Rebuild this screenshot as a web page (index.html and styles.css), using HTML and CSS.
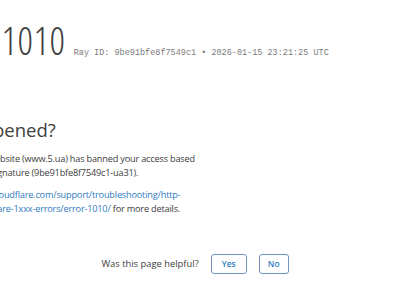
FILE: index.html
```html
<!DOCTYPE html>
<html lang="en">
<head>
    <meta charset="UTF-8">
    <meta name="viewport" content="width=device-width, initial-scale=1.0">
    <title>Access denied | www.5.ua used Cloudflare to restrict access</title>
    <link rel="stylesheet" href="styles.css">
</head>
<body>
    <div class="page">
        <header class="header">
            <h1 class="title">
                <span class="code">Error 1010</span>
                <span class="ray">Ray ID: 9be91bfe8f7549c1 &bull; 2026-01-15 23:21:25 UTC</span>
            </h1>
            <h2 class="subtitle">Access denied</h2>
        </header>
        <section class="what">
            <h2>What happened?</h2>
            <p>The owner of this website (www.5.ua) has banned your access based<br>on your browser's signature (9be91bfe8f7549c1-ua31).</p>
            <p><a href="#">https://developers.cloudflare.com/support/troubleshooting/http-<br>status-codes/cloudflare-1xxx-errors/error-1010/</a> for more details.</p>
        </section>
        <div class="feedback">
            <span>Was this page helpful?</span>
            <button>Yes</button>
            <button>No</button>
        </div>
    </div>
</body>
</html>
```

FILE: styles.css
```css
body {
    margin: 0;
    font-family: "Open Sans", "Noto Sans", sans-serif;
    color: #404040;
    background: #ffffff;
    overflow: hidden;
}
.page {
    margin-left: -90px;
    width: 580px;
}
.header {
    padding-top: 21px;
}
.title {
    margin: 0;
    padding-left: 19px;
    font-weight: 300;
    line-height: 1;
    white-space: nowrap;
}
.code {
    font-size: 38px;
    font-stretch: 75%;
    letter-spacing: 0.5px;
    color: #404040;
}
.ray {
    font-family: "Liberation Mono", monospace;
    font-size: 8.5px;
    font-weight: 400;
    color: #7a7a7a;
    margin-left: 0;
}
.subtitle {
    margin: 5px 0 0;
    font-size: 14px;
    font-weight: 300;
    color: #999999;
    line-height: 1.2;
}
.what {
    padding-top: 37px;
}
.what h2 {
    margin: 0 0 10px;
    font-size: 18.5px;
    font-weight: 400;
    line-height: 1.3;
    color: #404040;
}
.what p {
    margin: 0 0 8px;
    padding-left: 5px;
    font-size: 9.2px;
    letter-spacing: -0.2px;
    line-height: 14px;
    white-space: nowrap;
}
.what a {
    color: #2f7bbf;
    text-decoration: none;
}
.feedback {
    display: flex;
    align-items: center;
    justify-content: center;
    gap: 12px;
    margin-top: 38px;
    padding-right: 10px;
    font-size: 9.4px;
}
.feedback button {
    font-family: inherit;
    font-size: 8.5px;
    font-weight: 600;
    color: #2f7bbf;
    background: #ffffff;
    border: 1px solid #6d92c0;
    border-radius: 3px;
    height: 20px;
    padding: 0 10px;
}
.feedback button + button {
    padding: 0 8px;
}
```
